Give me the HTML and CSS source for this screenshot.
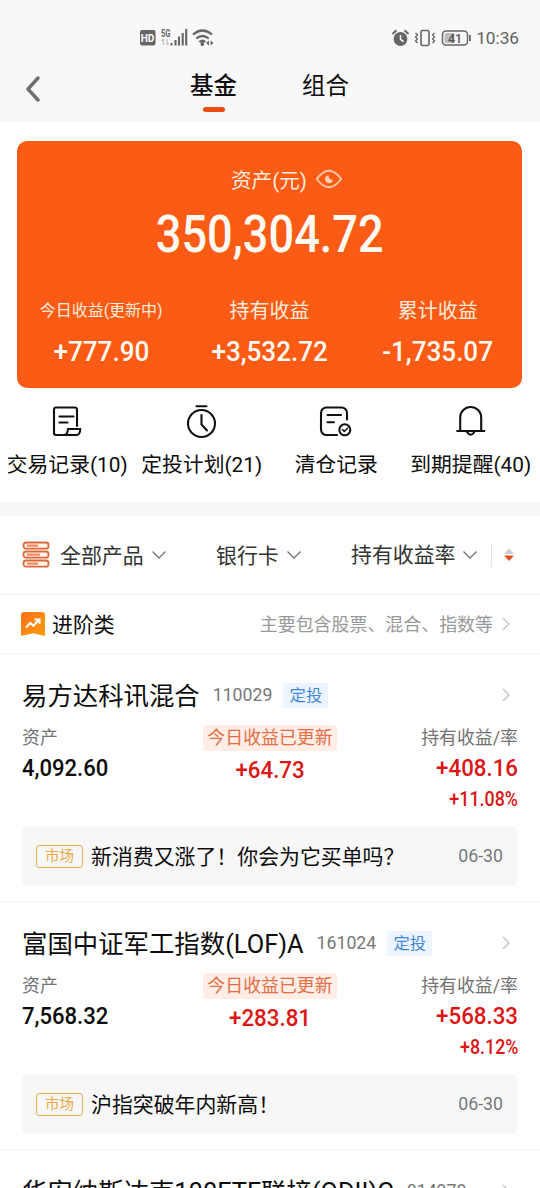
FILE: index.html
```html
<!DOCTYPE html>
<html lang="zh-CN">
<head>
<meta charset="utf-8">
<title>基金</title>
<link rel="stylesheet" href="styles.css">
</head>
<body>
<svg width="0" height="0" class="defs">
  <symbol id="right" viewBox="0 0 10 16"><path d="M2 2l6 6-6 6" fill="none" stroke="#c4c4c4" stroke-width="1.4"/></symbol>
  <symbol id="down" viewBox="0 0 16 10"><path d="M1.5 1.5L8 8l6.500-6.500" fill="none" stroke="#777" stroke-width="1.4"/></symbol>
</svg>
<header class="header">
  <div class="status">
    <svg class="status-left" width="76" height="22" viewBox="0 0 76 22">
      <rect x="1" y="3" width="15.500" height="15.500" rx="2" fill="#666"/>
      <text x="1.800" y="14.600" class="hd">HD</text>
      <text x="22" y="9.500" class="net" textLength="9.500" lengthAdjust="spacingAndGlyphs">5G</text>
      <path d="M24.500 12v6M22.500 14l2-2M28 12v6M28 18l2-2" stroke="#c4c4c4" stroke-width="1.3" fill="none"/>
      <path d="M32.500 16v2.500M36.500 13v5.500M40 9.500v9M43.700 6v12.500M47.200 2v16.500" stroke="#666" stroke-width="2.100"/>
      <path d="M54 7.500q9.500-8 19 0M57.300 11.500q6.200-5 12.500 0M60.300 15q3.200-2.500 6 0" fill="none" stroke="#666" stroke-width="2.200"/>
      <circle cx="63.300" cy="17" r="1.900" fill="#666"/>
      <path d="M70 13.500v5l-3-2.500zM71.500 13.500v5l3-2.500z" fill="#666"/>
    </svg>
    <div class="status-right">
      <svg width="82" height="22" viewBox="0 0 82 22">
        <circle cx="11.500" cy="12" r="6.900" fill="#666"/>
        <path d="M3.500 7l4-3.800M19.500 7l-4-3.800" stroke="#666" stroke-width="2"/>
        <path d="M11.500 8v4.300l3 2.400" fill="none" stroke="#f8f8f8" stroke-width="1.500"/>
        <rect x="32" y="3.500" width="8" height="15" rx="1.500" fill="none" stroke="#666" stroke-width="1.600"/>
        <path d="M26.500 6l2 2-2 2 2 2-2 2 2 2M45.500 6l-2 2 2 2-2 2 2 2-2 2" fill="none" stroke="#666" stroke-width="1.300"/>
        <rect x="53.500" y="4" width="25" height="14" rx="3.500" fill="none" stroke="#666" stroke-width="1.500"/>
        <rect x="55.500" y="6" width="10" height="10" rx="1.500" fill="#bbb"/>
        <path d="M81 8v6" stroke="#666" stroke-width="1.800"/>
        <text x="59" y="15.500" class="battery">41</text>
      </svg>
      <span class="clock">10:36</span>
    </div>
  </div>
  <nav class="tabs">
    <svg class="back" width="16" height="26" viewBox="0 0 16 26"><path d="M13 2L3 13l10 11" fill="none" stroke="#707070" stroke-width="3.400" stroke-linecap="round" stroke-linejoin="round"/></svg>
    <a class="tab active">基金</a>
    <a class="tab">组合</a>
  </nav>
</header>

<section class="card">
  <div class="card-title">资产(元)
    <svg width="28" height="20" viewBox="0 0 28 20"><path d="M1.800 10Q14-6.500 26.200 10Q14 26.500 1.800 10z" fill="none" stroke="#ffc4a4" stroke-width="2"/><path d="M13.500 6.200a4 4 0 1 0 4.500 4.500q-4 .8-4.500-4.500z" fill="#ffd0b6"/></svg>
  </div>
  <div class="total"><span class="num">350,304.72</span></div>
  <div class="stats">
    <div class="stat"><span class="stat-label small">今日收益(更新中)</span><span class="num">+777.90</span></div>
    <div class="stat"><span class="stat-label">持有收益</span><span class="num">+3,532.72</span></div>
    <div class="stat"><span class="stat-label">累计收益</span><span class="num">-1,735.07</span></div>
  </div>
</section>

<section class="quick">
  <a class="quick-item"><svg width="34" height="36" viewBox="0 0 34 36"><path d="M27 22V5.500a2 2 0 0 0-2-2H6a2 2 0 0 0-2 2V29a2 2 0 0 0 2 2h20.500q3.500 0 3.800-6H18q-.5 6-4 6M9.500 12.500h14M9.500 18.500h8"/></svg>交易记录(10)</a>
  <a class="quick-item"><svg width="34" height="36" viewBox="0 0 34 36"><circle cx="16.500" cy="19.500" r="13.500"/><path d="M11.500 2.200h10M16.500 11v9.500l5.500 6"/></svg>定投计划(21)</a>
  <a class="quick-item"><svg width="34" height="36" viewBox="0 0 34 36"><path d="M28 15.500V9a5.500 5.500 0 0 0-5.500-5.500H7.500A5.500 5.500 0 0 0 2 9v16.500A5.500 5.500 0 0 0 7.500 31H18M8.500 11H22M8.500 18.200h6.500"/><circle cx="25.800" cy="25.800" r="5.500"/><path d="M23.300 25.500l2 2 3.200-3.200" class="thin"/></svg>清仓记录</a>
  <a class="quick-item"><svg width="34" height="36" viewBox="0 0 34 36"><path d="M3.200 27h27.200M6.200 27V13.500a10.500 10.500 0 0 1 21 0V27M13 28q3.700 5.500 7.400 0"/></svg>到期提醒(40)</a>
</section>

<section class="filters">
  <svg class="stack" width="28" height="28" viewBox="0 0 28 28"><g fill="#fff3ec" stroke="#da6a3c" stroke-width="1.800"><rect x="1.500" y="1.500" width="25" height="6.200" rx="2.500"/><rect x="1.500" y="10.500" width="25" height="6.200" rx="2.500"/><rect x="1.500" y="19.500" width="25" height="6.200" rx="2.500"/></g><path d="M5 4.600h11M5 13.600h13M5 22.600h11" stroke="#f18b5d" stroke-width="2.400"/></svg>
  <span class="filter all"><span class="lift">全部产品</span><svg width="16" height="10"><use href="#down"/></svg></span>
  <span class="filter bank"><span class="lift">银行卡</span><svg width="16" height="10"><use href="#down"/></svg></span>
  <span class="filter rate"><span>持有收益率</span><svg width="16" height="10"><use href="#down"/></svg></span>
  <svg class="sort" width="10" height="14" viewBox="0 0 10 14"><path d="M0 6l5-5.500L10 6z" fill="#ccc"/><path d="M0 7.500h10l-5 5.500z" fill="#e05020"/></svg>
</section>

<section class="category">
  <svg width="24" height="24" viewBox="0 0 24 24"><defs><linearGradient id="flag" x1="0" y1="0" x2="1" y2="1"><stop offset="0" stop-color="#f9701a"/><stop offset="1" stop-color="#ff9c0c"/></linearGradient></defs><path d="M3 0h18a3 3 0 0 1 3 3v21l-12-2.800L0 24V3a3 3 0 0 1 3-3z" fill="url(#flag)"/><path d="M5 15.500l4.300-4.500 3.200 2.800L17.500 8M13.500 7.500h5v4.500" fill="none" stroke="#fff" stroke-width="2"/></svg>
  <span class="category-name lift">进阶类</span>
  <span class="category-note lift">主要包含股票、混合、指数等</span>
  <svg width="10" height="16"><use href="#right"/></svg>
</section>

<article class="fund">
  <div class="fund-head"><span class="fund-name lift">易方达科讯混合</span><span class="code">110029</span><span class="plan">定投</span><svg width="10" height="16"><use href="#right"/></svg></div>
  <div class="figures">
    <div class="col"><span class="label">资产</span><span class="num">4,092.60</span></div>
    <div class="col mid"><span class="updated">今日收益已更新</span><span class="num up">+64.73</span></div>
    <div class="col end"><span class="label">持有收益/率</span><span class="num up">+408.16</span><span class="num up pct">+11.08%</span></div>
  </div>
  <div class="news"><span class="market">市场</span><span class="news-title lift">新消费又涨了！你会为它买单吗？</span><span class="date">06-30</span></div>
</article>
<article class="fund">
  <div class="fund-head"><span class="fund-name lift">富国中证军工指数(LOF)A</span><span class="code">161024</span><span class="plan">定投</span><svg width="10" height="16"><use href="#right"/></svg></div>
  <div class="figures">
    <div class="col"><span class="label">资产</span><span class="num">7,568.32</span></div>
    <div class="col mid"><span class="updated">今日收益已更新</span><span class="num up">+283.81</span></div>
    <div class="col end"><span class="label">持有收益/率</span><span class="num up">+568.33</span><span class="num up pct">+8.12%</span></div>
  </div>
  <div class="news"><span class="market">市场</span><span class="news-title lift">沪指突破年内新高！</span><span class="date">06-30</span></div>
</article>
<article class="fund last">
  <div class="fund-head"><span class="fund-name lift">华安纳斯达克100ETF联接(QDII)C</span><span class="code">014978</span><svg width="10" height="16"><use href="#right"/></svg></div>
</article>
</body>
</html>
```
FILE: styles.css
```css
* { box-sizing: border-box; }
html, body { height: 1188px; overflow: hidden; }
body {
  margin: 0;
  width: 540px;
  background: #fff;
  color: #0c0c0c;
  font-family: Roboto, "Noto Sans CJK SC", sans-serif;
  white-space: nowrap;
}
svg { flex: none; display: block; }
.defs { display: none; }
.num { display: inline-block; font-weight: 500; transform: scaleX(.9); }
.lift { padding-bottom: 2px; }

.header { height: 123px; background: #f8f8f8; }
.status { display: flex; justify-content: space-between; padding: 27px 21px 0 139px; height: 60px; }
.status-right { display: flex; gap: 5px; height: 22px; align-items: center; }
.clock { font-size: 17.200px; color: #606060; }
.hd { font: 700 10px Roboto, sans-serif; fill: #fff; }
.net { font: 700 10px Roboto, sans-serif; fill: #666; }
.battery { font: 500 12.500px Roboto, sans-serif; fill: #555; }
.tabs { display: flex; padding-left: 25px; height: 63px; }
.back { margin: 16px 149px 0 0; }
.tab { width: 47px; margin-right: 65px; font-size: 23.500px; line-height: 53px; }
.active { font-weight: 500; }
.active::after { content: ""; display: block; width: 22px; height: 5px; margin: -6px auto 0; border-radius: 3px; background: #ea4c12; }

.card { width: 505px; height: 247px; margin: 18px 0 0 17px; border-radius: 10px; background: #fb5b14; color: #fffaf2; }
.card-title { display: flex; align-items: center; gap: 8px; height: 75px; padding-left: 214px; font-size: 20.600px; color: #ffebdc; }
.total { height: 80px; margin-top: -21px; text-align: center; font-size: 51px; line-height: 80px; }
.total .num { transform: scaleX(.885); }
.stats { display: grid; grid-template-columns: repeat(3, 1fr); margin-top: 19px; }
.stat { display: flex; flex-direction: column; align-items: center; font-size: 28.500px; }
.stat .num { line-height: 48px; transform: scaleX(.915); }
.stat-label { font-size: 20px; line-height: 34px; color: #ffebdc; }
.small { font-size: 16px; }

.quick { display: grid; grid-template-columns: repeat(4, 134.500px); height: 114px; padding-top: 16px; }
.quick-item { display: flex; flex-direction: column; align-items: center; font-size: 20.800px; line-height: 50px; }
.quick-item svg { fill: none; stroke: #111; stroke-width: 2.100; stroke-linecap: round; stroke-linejoin: round; }
.quick-item .thin { stroke-width: 1.500; }

.filters { display: flex; align-items: center; height: 93px; padding-left: 22px; border-top: 14px solid #f7f7f7; border-bottom: 1px solid #f1f1f1; font-size: 20.900px; color: #333; }
.filter { display: flex; align-items: center; gap: 7px; }
.all { margin-left: 10px; width: 156px; }
.bank { width: 135px; }
.rate { width: 141px; height: 23px; line-height: 23px; border-right: 1px solid #e4e4e4; }
.sort { margin-left: 12px; }

.category { display: flex; align-items: center; height: 59px; padding: 0 29px 0 21px; border-bottom: 1px solid #f5f5f5; }
.category-name { margin-left: 7px; font-size: 20.900px; }
.category-note { margin: 0 8px 0 auto; font-size: 17.950px; color: #999; }

.fund { height: 248px; padding: 23px 22px 0; border-bottom: 1px solid #f5f5f5; }
.last { height: 38px; overflow: hidden; border-bottom: 0; }
.fund-head { display: flex; align-items: center; height: 36px; padding-right: 7px; }
.fund-head > svg { margin-left: auto; }
.fund-name { font-size: 25.400px; }
.code { margin-left: 13px; font-size: 17.700px; color: #777; }
.plan { width: 45px; height: 25px; margin-left: 11px; border-radius: 2px; background: #ebf4ff; color: #4387d6; font-size: 16.300px; line-height: 25px; text-align: center; }
.figures { display: grid; grid-template-columns: repeat(3, 1fr); height: 113px; padding-top: 11px; }
.col { display: flex; flex-direction: column; align-items: flex-start; font-size: 24.500px; line-height: 32px; }
.col .num { transform-origin: left; }
.label { font-size: 17.900px; line-height: 28px; color: #737373; }
.mid { align-items: center; }
.mid .num { margin-top: 2px; transform: scaleX(.91); transform-origin: center; }
.updated { height: 26px; margin-top: 1px; margin-bottom: 1px; padding: 0 4px; border-radius: 3px; background: #ffede6; color: #e26e46; font-size: 17.900px; line-height: 25px; }
.end { align-items: flex-end; }
.end .num { transform: scaleX(.91); transform-origin: right; }
.up { color: #dc1515; }
.end .pct { font-size: 20.300px; line-height: 31px; transform: scaleX(.88); }
.news { display: flex; align-items: center; height: 60px; padding: 0 15px 0 14px; border-radius: 6px; background: #f7f7f7; }
.market { width: 47px; height: 23px; border: 1px solid #e9b158; border-radius: 3px; color: #e9a842; font-size: 14.500px; line-height: 21px; text-align: center; }
.news-title { margin-left: 8px; font-size: 20.900px; }
.date { margin-left: auto; font-size: 17.700px; color: #777; }
```
